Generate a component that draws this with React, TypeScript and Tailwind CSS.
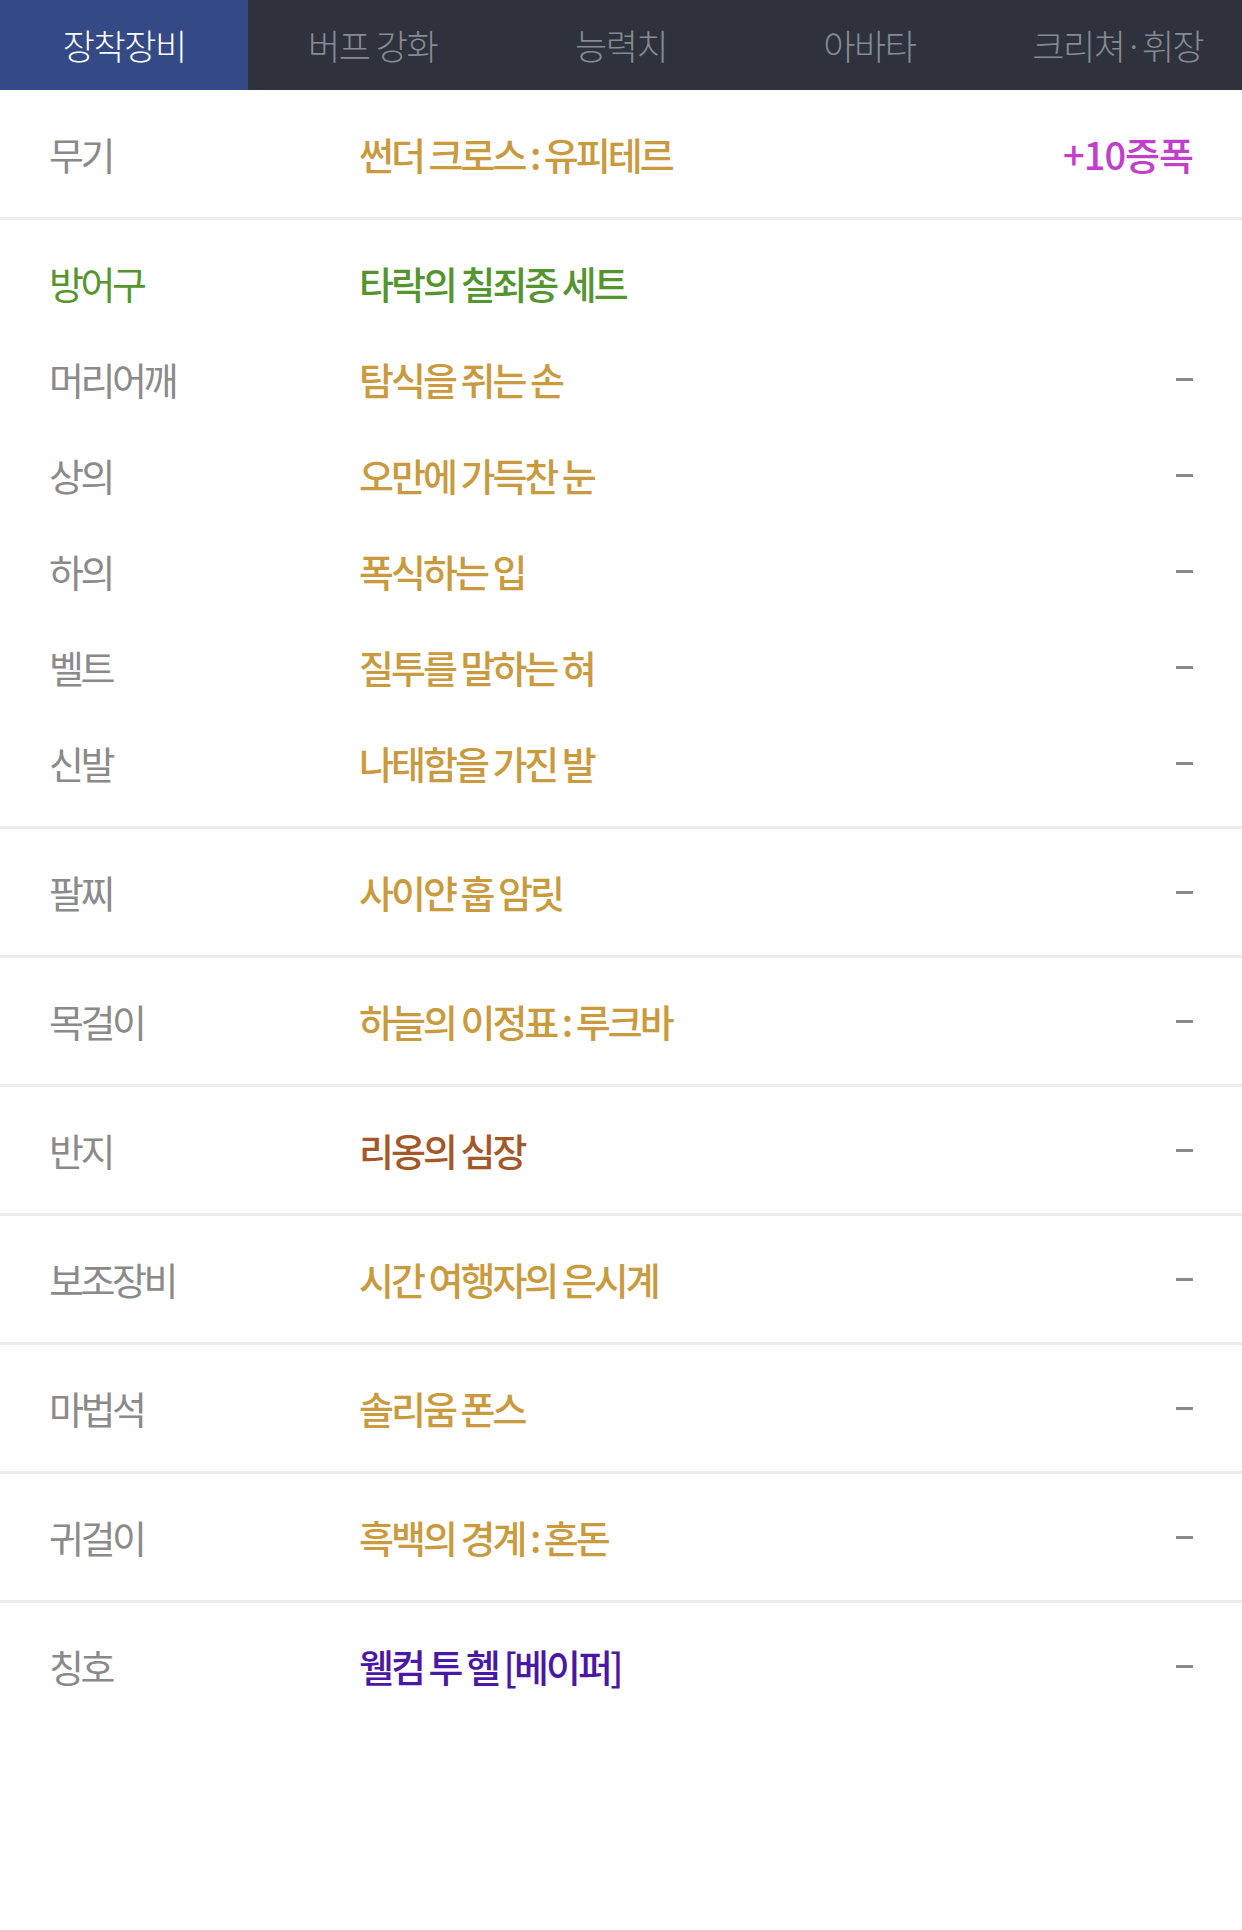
import React from "react";

const tabs = ["장착장비", "버프 강화", "능력치", "아바타", "크리쳐·휘장"];

type Row = { label: string; name: string; color: string; right?: string; labelColor?: string };

const weapon: Row = { label: "무기", name: "썬더 크로스 : 유피테르", color: "text-[#c99a3e]", right: "+10증폭" };

const armor: Row[] = [
  { label: "방어구", name: "타락의 칠죄종 세트", color: "text-[#55952f]", labelColor: "text-[#55952f]", right: "" },
  { label: "머리어깨", name: "탐식을 쥐는 손", color: "text-[#c99a3e]" },
  { label: "상의", name: "오만에 가득찬 눈", color: "text-[#c99a3e]" },
  { label: "하의", name: "폭식하는 입", color: "text-[#c99a3e]" },
  { label: "벨트", name: "질투를 말하는 혀", color: "text-[#c99a3e]" },
  { label: "신발", name: "나태함을 가진 발", color: "text-[#c99a3e]" },
];

const singles: Row[] = [
  { label: "팔찌", name: "사이얀 훕 암릿", color: "text-[#c99a3e]" },
  { label: "목걸이", name: "하늘의 이정표 : 루크바", color: "text-[#c99a3e]" },
  { label: "반지", name: "리옹의 심장", color: "text-[#a4582a]" },
  { label: "보조장비", name: "시간 여행자의 은시계", color: "text-[#c99a3e]" },
  { label: "마법석", name: "솔리움 폰스", color: "text-[#c99a3e]" },
  { label: "귀걸이", name: "흑백의 경계 : 혼돈", color: "text-[#c99a3e]" },
  { label: "칭호", name: "웰컴 투 헬 [베이퍼]", color: "text-[#4a17a6]" },
];

function Line({ row, h }: { row: Row; h: string }) {
  return (
    <div className={`flex items-center px-[49px] ${h}`}>
      <div className={`w-[310px] shrink-0 ${row.labelColor ?? "text-[#8a8a8a]"}`}>{row.label}</div>
      <div className={`flex-1 font-medium tracking-[-3px] ${row.color}`}>{row.name}</div>
      {row.right === undefined ? (
        <div className="w-[17px] h-[3px] bg-[#8a8a8a]" />
      ) : row.right ? (
        <div className="font-medium text-[#c13fcb] tracking-[-1px]">{row.right}</div>
      ) : null}
    </div>
  );
}

export default function App() {
  return (
    <div
      className="w-[1242px] min-h-[1930px] bg-white"
      style={{ fontFamily: '"Noto Sans CJK KR", "Noto Sans", sans-serif' }}
    >
      {/* tabs */}
      <div className="flex h-[90px] bg-[#2e323d]">
        {tabs.map((t, i) => (
          <div
            key={t}
            className={`flex-1 flex items-center justify-center text-[35px] tracking-[-1.5px] font-light ${
              i === 0 ? "bg-[#334a87] text-white" : "text-[#878a93]"
            }`}
          >
            {t}
          </div>
        ))}
      </div>

      <div className="text-[38px] tracking-[-3.5px] leading-none">
        <div className="border-b-[3px] border-[#ececec]">
          <Line row={weapon} h="h-[127px]" />
        </div>

        <div className="border-b-[3px] border-[#ececec] pt-[15px] pb-[15px]">
          {armor.map((r) => (
            <Line key={r.label} row={r} h="h-[96px]" />
          ))}
        </div>

        {singles.map((r, i) => (
          <div key={r.label} className={i < singles.length - 1 ? "border-b-[3px] border-[#ececec]" : ""}>
            <Line row={r} h="h-[126px]" />
          </div>
        ))}
      </div>
    </div>
  );
}
